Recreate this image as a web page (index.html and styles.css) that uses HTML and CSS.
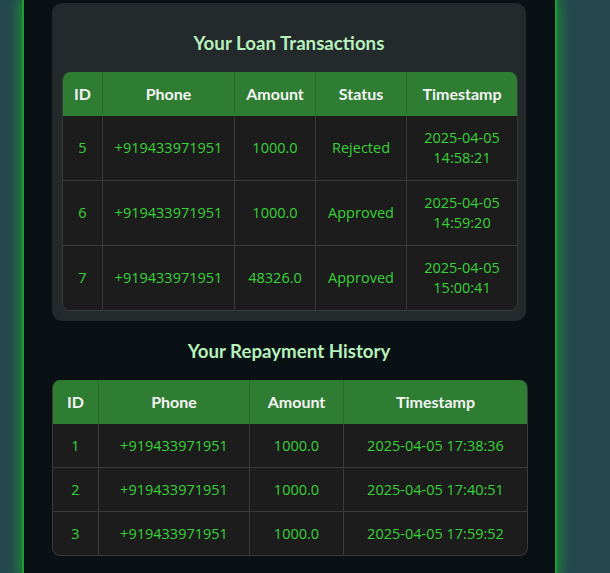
FILE: index.html
```html
<!DOCTYPE html>
<html>
<head>
<meta charset="utf-8">
<link rel="stylesheet" href="styles.css">
</head>
<body>
<div class="page">
  <section class="card">
    <h2 class="title">Your Loan Transactions</h2>
    <table class="grid">
      <colgroup>
        <col class="c-id1"><col class="c-phone1"><col class="c-amt1"><col class="c-status"><col class="c-ts1">
      </colgroup>
      <thead>
        <tr><th>ID</th><th>Phone</th><th>Amount</th><th>Status</th><th>Timestamp</th></tr>
      </thead>
      <tbody>
        <tr><td>5</td><td>+919433971951</td><td>1000.0</td><td>Rejected</td><td>2025-04-05<br>14:58:21</td></tr>
        <tr><td>6</td><td>+919433971951</td><td>1000.0</td><td>Approved</td><td>2025-04-05<br>14:59:20</td></tr>
        <tr><td>7</td><td>+919433971951</td><td>48326.0</td><td>Approved</td><td>2025-04-05<br>15:00:41</td></tr>
      </tbody>
    </table>
  </section>

  <h2 class="title title-2">Your Repayment History</h2>
  <table class="grid grid-compact">
    <colgroup>
      <col class="c-id2"><col class="c-phone2"><col class="c-amt2"><col class="c-ts2">
    </colgroup>
    <thead>
      <tr><th>ID</th><th>Phone</th><th>Amount</th><th>Timestamp</th></tr>
    </thead>
    <tbody>
      <tr><td>1</td><td>+919433971951</td><td>1000.0</td><td>2025-04-05 17:38:36</td></tr>
      <tr><td>2</td><td>+919433971951</td><td>1000.0</td><td>2025-04-05 17:40:51</td></tr>
      <tr><td>3</td><td>+919433971951</td><td>1000.0</td><td>2025-04-05 17:59:52</td></tr>
    </tbody>
  </table>
</div>
</body>
</html>
```
FILE: styles.css
```css
html, body {
  margin: 0;
  padding: 0;
}
body {
  background: #25464f;
  font-family: "Open Sans", "Noto Sans", sans-serif;
  height: 573px;
  overflow: hidden;
}
.page {
  margin-left: 22px;
  width: 474px;
  min-height: 573px;
  background: #0a1114;
  border-left: 2px solid #1f9b33;
  border-right: 2px solid #1f9b33;
  box-shadow: 0 0 14px 2px #1c9830;
  padding: 3px 29px 0 28px;
}
.card {
  background: #24292c;
  border-radius: 10px;
  padding: 0 10px 10px;
}
.title {
  margin: 0;
  padding: 28px 0 17px;
  text-align: center;
  color: #b6f0bb;
  font-family: Lato, "Open Sans", sans-serif;
  font-size: 18.7px;
  line-height: 24px;
  font-weight: 700;
}
.title-2 {
  padding: 18px 0 17px;
}
.grid {
  width: 100%;
  border-collapse: separate;
  border-spacing: 0;
  table-layout: fixed;
  border-radius: 8px;
  overflow: hidden;
  background: #1c1c1c;
  border: 1px solid #353a3c;
  border-top: none;
  font-size: 14.5px;
  line-height: 20px;
}
.grid th {
  background: #2e7d32;
  color: #f4f4f4;
  font-family: Lato, "Open Sans", sans-serif;
  font-size: 16px;
  font-weight: 700;
  padding: 12px 4px;
  border-left: 1px solid #2a6a2d;
  text-align: center;
}
.grid td {
  color: #38d238;
  padding: 12px 4px;
  text-align: center;
  border-left: 1px solid #3a3a3a;
  border-top: 1px solid #3a3a3a;
}
.grid-compact td {
  padding: 11.5px 4px;
}
.grid tbody tr:first-child td {
  border-top: none;
}
.grid th:first-child,
.grid td:first-child {
  border-left: none;
}
.c-id1 { width: 39px; }
.c-phone1 { width: 132px; }
.c-amt1 { width: 81px; }
.c-status { width: 91px; }
.c-ts1 { width: 111px; }
.c-id2 { width: 45px; }
.c-phone2 { width: 151px; }
.c-amt2 { width: 94px; }
.c-ts2 { width: 184px; }
```
